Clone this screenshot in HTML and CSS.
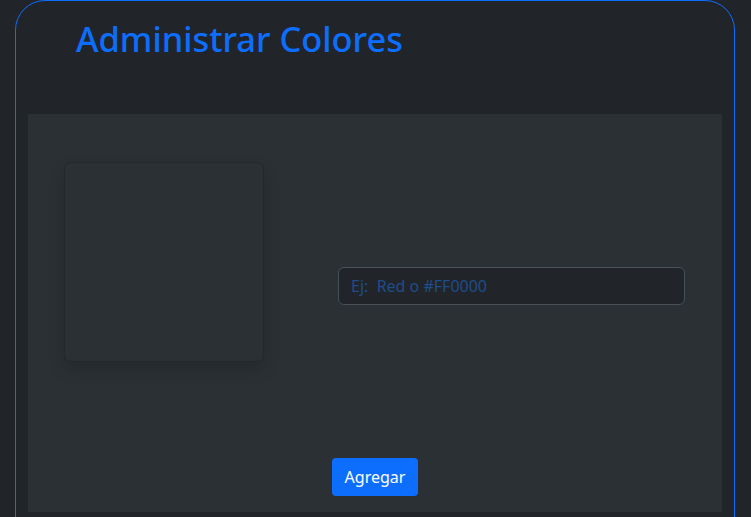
FILE: index.html
```html
<!DOCTYPE html>
<html lang="es">
<head>
<meta charset="utf-8">
<title>Administrar Colores</title>
<link rel="stylesheet" href="styles.css">
</head>
<body>
<div class="card">
  <header class="card-header">
    <h1 class="title">Administrar Colores</h1>
  </header>
  <section class="panel">
    <div class="row">
      <div class="swatch-col">
        <div class="swatch"></div>
      </div>
      <div class="input-col">
        <input class="color-input" type="text" placeholder="Ej:  Red o #FF0000">
      </div>
    </div>
    <div class="actions">
      <button class="btn" type="button">Agregar</button>
    </div>
  </section>
</div>
</body>
</html>
```
FILE: styles.css
```css
html, body {
  margin: 0;
  padding: 0;
  background: #212529;
  font-family: "Noto Sans", "Open Sans", sans-serif;
  overflow: hidden;
}
.card {
  margin-left: 15px;
  width: 720px;
  height: 580px;
  border: 1px solid #0d6efd;
  border-radius: 30px;
  padding: 0 12px;
  box-sizing: border-box;
  background: #212529;
}
.card-header {
  height: 113px;
  padding-left: 48px;
  box-sizing: border-box;
}
.title {
  margin: 0;
  padding-top: 14px;
  font-size: 34.4px;
  font-weight: 500;
  line-height: 48px;
  color: #0d6efd;
}
.panel {
  background: #2b3035;
  height: 398px;
  display: flex;
  flex-direction: column;
}
.row {
  display: flex;
  padding-top: 48px;
  height: 200px;
}
.swatch-col {
  padding-left: 36px;
  width: 310px;
  box-sizing: border-box;
}
.swatch {
  width: 200px;
  height: 200px;
  box-sizing: border-box;
  border: 1px solid #24282c;
  border-radius: 6px;
  background: #2b3035;
  box-shadow: 0 8px 16px rgba(0,0,0,0.15);
}
.input-col {
  padding-top: 105px;
}
.color-input {
  width: 347px;
  height: 38px;
  box-sizing: border-box;
  background: #212529;
  border: 1px solid #495057;
  border-radius: 6px;
  padding: 0 12px;
  font-family: inherit;
  font-size: 16px;
  color: #dee2e6;
  outline: none;
}
.color-input::placeholder {
  color: #1f4c8a;
}
.actions {
  margin-top: auto;
  padding-bottom: 16px;
  display: flex;
  justify-content: center;
}
.btn {
  height: 38px;
  width: 86px;
  padding: 0;
  border: none;
  border-radius: 4px;
  background: #0d6efd;
  color: #fff;
  font-family: inherit;
  font-size: 16px;
}
```
